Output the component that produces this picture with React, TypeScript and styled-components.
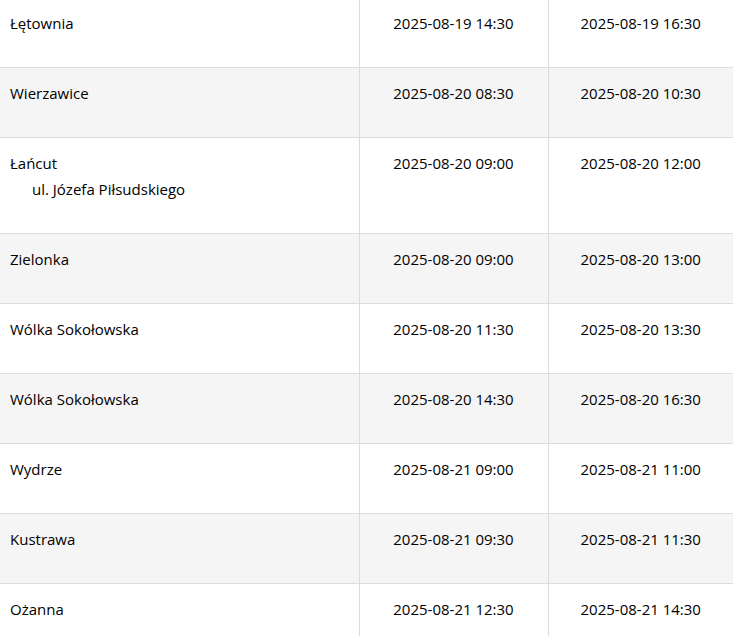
import React from 'react';
import styled, { createGlobalStyle } from 'styled-components';

const GlobalStyle = createGlobalStyle`
	html, body {
		margin: 0;
		padding: 0;
		background: #fff;
		overflow: hidden;
	}
	body {
		font-family: "Open Sans", "Noto Sans", sans-serif;
		color: #000;
	}
`;

const Wrapper = styled.div`
	width: 733px;
	height: 636px;
	overflow: hidden;
`;

const Table = styled.table`
	width: 733px;
	margin-top: -2px;
	border-collapse: collapse;
	table-layout: fixed;
	font-size: 15px;
	line-height: 20px;
`;

const Row = styled.tr<{ $alt: boolean }>`
	background: ${(p) => (p.$alt ? '#f5f5f5' : '#ffffff')};
	border-bottom: 1px solid #dcdcdc;
`;

const NameCell = styled.td`
	vertical-align: top;
	padding: 15px 10px 34px 10px;
	border-right: 1px solid #dcdcdc;
`;

const DateCell = styled.td`
	vertical-align: top;
	text-align: center;
	padding: 15px 8px 34px 8px;
	border-right: 1px solid #dcdcdc;
	white-space: nowrap;

	&:last-child {
		border-right: none;
	}
`;

const Street = styled.div`
	margin-top: 6px;
	padding-left: 22px;
`;

interface Entry {
	place: string;
	street?: string;
	from: string;
	to: string;
}

const entries: Entry[] = [
	{ place: 'Łętownia', from: '2025-08-19 14:30', to: '2025-08-19 16:30' },
	{ place: 'Wierzawice', from: '2025-08-20 08:30', to: '2025-08-20 10:30' },
	{ place: 'Łańcut', street: 'ul. Józefa Piłsudskiego', from: '2025-08-20 09:00', to: '2025-08-20 12:00' },
	{ place: 'Zielonka', from: '2025-08-20 09:00', to: '2025-08-20 13:00' },
	{ place: 'Wólka Sokołowska', from: '2025-08-20 11:30', to: '2025-08-20 13:30' },
	{ place: 'Wólka Sokołowska', from: '2025-08-20 14:30', to: '2025-08-20 16:30' },
	{ place: 'Wydrze', from: '2025-08-21 09:00', to: '2025-08-21 11:00' },
	{ place: 'Kustrawa', from: '2025-08-21 09:30', to: '2025-08-21 11:30' },
	{ place: 'Ożanna', from: '2025-08-21 12:30', to: '2025-08-21 14:30' },
];

function App() {
	return (
		<Wrapper>
			<GlobalStyle />
			<Table>
				<colgroup>
					<col style={{ width: 359 }} />
					<col style={{ width: 189 }} />
					<col style={{ width: 185 }} />
				</colgroup>
				<tbody>
					{entries.map((e, i) => (
						<Row key={i} $alt={i % 2 === 1}>
							<NameCell>
								{e.place}
								{e.street && <Street>{e.street}</Street>}
							</NameCell>
							<DateCell>{e.from}</DateCell>
							<DateCell>{e.to}</DateCell>
						</Row>
					))}
				</tbody>
			</Table>
		</Wrapper>
	);
}

export default App;
